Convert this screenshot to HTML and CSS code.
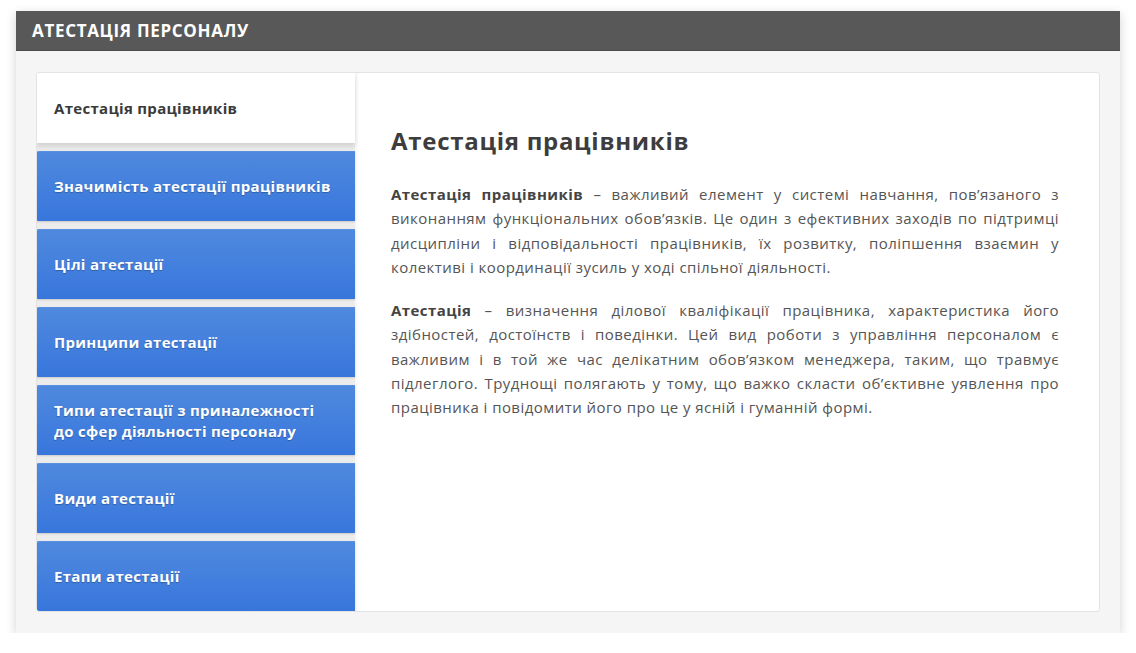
FILE: index.html
```html
<!DOCTYPE html>
<html lang="uk">
<head>
<meta charset="utf-8">
<title>Атестація персоналу</title>
<link rel="stylesheet" href="styles.css">
</head>
<body>
<div class="page">
  <section class="card">
    <header class="card-header">АТЕСТАЦІЯ ПЕРСОНАЛУ</header>
    <div class="card-body">
      <div class="panel">
        <nav class="tabs">
          <div class="tab active">Атестація працівників</div>
          <div class="tab">Значимість атестації працівників</div>
          <div class="tab">Цілі атестації</div>
          <div class="tab">Принципи атестації</div>
          <div class="tab">Типи атестації з приналежності до сфер діяльності персоналу</div>
          <div class="tab">Види атестації</div>
          <div class="tab">Етапи атестації</div>
        </nav>
        <article class="content">
          <h2 class="title">Атестація працівників</h2>
          <p class="text"><b>Атестація працівників</b> – важливий елемент у системі навчання, пов’язаного з виконанням функціональних обов’язків. Це один з ефективних заходів по підтримці дисципліни і відповідальності працівників, їх розвитку, поліпшення взаємин у колективі і координації зусиль у ході спільної діяльності.</p>
          <p class="text"><b>Атестація</b> – визначення ділової кваліфікації працівника, характеристика його здібностей, достоїнств і поведінки. Цей вид роботи з управління персоналом є важливим і в той же час делікатним обов’язком менеджера, таким, що травмує підлеглого. Труднощі полягають у тому, що важко скласти об’єктивне уявлення про працівника і повідомити його про це у ясній і гуманній формі.</p>
        </article>
      </div>
    </div>
  </section>
</div>
</body>
</html>
```
FILE: styles.css
```css
* { box-sizing: border-box; }
html, body { margin: 0; padding: 0; background: #ffffff; }
body { font-family: "Open Sans", "Noto Sans", sans-serif; }
.page { padding: 11px 16px 0 16px; }
.card {
  width: 1104px;
  background: #f5f5f5;
  box-shadow: 0 3px 10px rgba(0,0,0,0.18);
}
.card-header {
  height: 40px;
  background: #585858;
  color: #ffffff;
  font-weight: 700;
  font-size: 17px;
  letter-spacing: 0.04em;
  line-height: 40px;
  padding-left: 16px;
  border-bottom: 1px solid #4a4a4a;
}
.card-body { padding: 21px 20px 21px 20px; }
.panel {
  display: flex;
  background: #ffffff;
  border: 1px solid #e3e3e3;
  border-radius: 3px;
  overflow: hidden;
}
.tabs {
  width: 319px;
  flex: none;
  display: flex;
  flex-direction: column;
  gap: 8px;
  margin-left: -1px;
  background: #ececec;
}
.tab {
  height: 70px;
  display: flex;
  align-items: center;
  padding: 0 26px 0 18px;
  font-weight: 700;
  font-size: 15px;
  letter-spacing: 0.02em;
  line-height: 21px;
  color: #ffffff;
  text-shadow: 0 1px 1px rgba(0,0,0,0.25);
  background: linear-gradient(#4f89de, #3876dc);
  border-top: 1px solid #5a90e0;
  border-radius: 3px 0 0 3px;
  box-shadow: 0 1px 2px rgba(0,0,0,0.15);
}
.tab.wide { padding-right: 4px; }
.tab:nth-child(2) { padding-right: 4px; }
.tab.active {
  background: #ffffff;
  color: #3a3a3a;
  text-shadow: none;
  border-top: none;
  border-radius: 0;
  box-shadow: 0 3px 5px rgba(0,0,0,0.12);
  position: relative;
  z-index: 1;
}
.content {
  flex: 1;
  padding: 52px 40px 40px 36px;
  box-shadow: inset 3px 0 4px -2px rgba(0,0,0,0.06);
}
.title {
  margin: 0 0 25px 0;
  font-size: 24px;
  letter-spacing: 0.03em;
  line-height: 32px;
  font-weight: 700;
  color: #3d3d3d;
}
.text {
  margin: 0 0 19px 0;
  font-size: 15px;
  letter-spacing: 0.03em;
  line-height: 24.3px;
  color: #555555;
  text-align: justify;
}
.text b { color: #444444; }
```
